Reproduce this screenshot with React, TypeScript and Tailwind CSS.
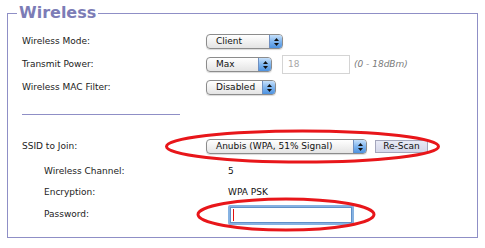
import React from "react";

const Stepper = () => (
  <span className="flex w-[13px] flex-col items-center justify-center gap-[2px] rounded-r-[3px] border-l border-[#6f8fc0] bg-linear-to-b from-[#c6e0fa] via-[#7fb5ee] to-[#4d92e0]">
    <svg width="5" height="3" viewBox="0 0 5 3">
      <path d="M2.5 0 L5 3 L0 3 Z" fill="#111" />
    </svg>
    <svg width="5" height="3" viewBox="0 0 5 3">
      <path d="M0 0 L5 0 L2.5 3 Z" fill="#111" />
    </svg>
  </span>
);

const Select = ({ label, width }: { label: string; width: string }) => (
  <div
    className={`flex h-[15px] items-stretch rounded-[4px] border border-[#8c8c8c] bg-linear-to-b from-white to-[#e4e4e4] shadow-[0_1px_1px_rgba(0,0,0,0.15)] ${width}`}
  >
    <span className="flex-1 pl-[9px] leading-[13px] text-[#111]">{label}</span>
    <Stepper />
  </div>
);

const Row = ({
  label,
  children,
  indent = false,
  height = "h-[23px]",
}: {
  label: string;
  children?: React.ReactNode;
  indent?: boolean;
  height?: string;
}) => (
  <div className={`flex items-center ${height} ${indent ? "pl-[22px]" : ""}`}>
    <span className="w-[184px] shrink-0 text-[#222]">{label}</span>
    <div className="flex items-center">{children}</div>
  </div>
);

export default function App() {
  return (
    <div className="relative h-[248px] w-[485px] bg-white pt-[3px] font-['DejaVu_Sans',sans-serif] text-[9px]">
      <fieldset className="mx-[7px] h-[235px] w-[471px] border border-[#8f8fc6] px-[14px] pt-[7px]">
        <legend className="-ml-[5px] px-[2px] text-[16px] leading-[20px] font-bold text-[#7c7cb6]">
          Wireless
        </legend>

        <Row label="Wireless Mode:">
          <Select label="Client" width="w-[77px]" />
        </Row>
        <Row label="Transmit Power:">
          <Select label="Max" width="w-[66px]" />
          <div className="ml-[10px] flex h-[19px] w-[68px] items-center border border-[#d4d4d4] pl-[5px] text-[#a8a8a8]">
            18
          </div>
          <span className="ml-[4px] italic text-[#7a7a7a]">(0 - 18dBm)</span>
        </Row>
        <Row label="Wireless MAC Filter:">
          <Select label="Disabled" width="w-[70px]" />
        </Row>

        <div className="mt-[15px] h-px w-[158px] bg-[#8f8fc6]" />

        <div className="mt-[20px]">
          <Row label="SSID to Join:">
            <Select label="Anubis (WPA, 51% Signal)" width="w-[161px]" />
            <button className="ml-[8px] h-[13px] w-[53px] border border-[#a4a6bc] bg-linear-to-b from-[#e8eaf6] to-[#d4d7ea] text-[9px] leading-[11px] text-[#111]">
              Re-Scan
            </button>
          </Row>
        </div>

        <div className="mt-[3px]">
          <Row label="Wireless Channel:" indent height="h-[21px]">
            <span className="text-[#111]">5</span>
          </Row>
          <Row label="Encryption:" indent height="h-[21px]">
            <span className="text-[#111]">WPA PSK</span>
          </Row>
          <Row label="Password:" indent height="h-[23px]">
            <div className="flex h-[20px] w-[126px] items-center rounded-[2px] border-2 border-[#86b2e2] bg-white pl-[3px] shadow-[inset_0_0_0_1px_#5f8fc8]">
              <span className="h-[12px] w-px bg-[#e01010]" />
            </div>
          </Row>
        </div>
      </fieldset>

      {/* red annotation ellipses */}
      <svg className="pointer-events-none absolute left-0 top-0" width="485" height="248">
        <ellipse cx="302.5" cy="146.5" rx="136" ry="15.5" fill="none" stroke="#e8161a" strokeWidth="3" />
        <ellipse cx="286" cy="214.5" rx="88" ry="15.5" fill="none" stroke="#e8161a" strokeWidth="3" />
      </svg>
    </div>
  );
}
